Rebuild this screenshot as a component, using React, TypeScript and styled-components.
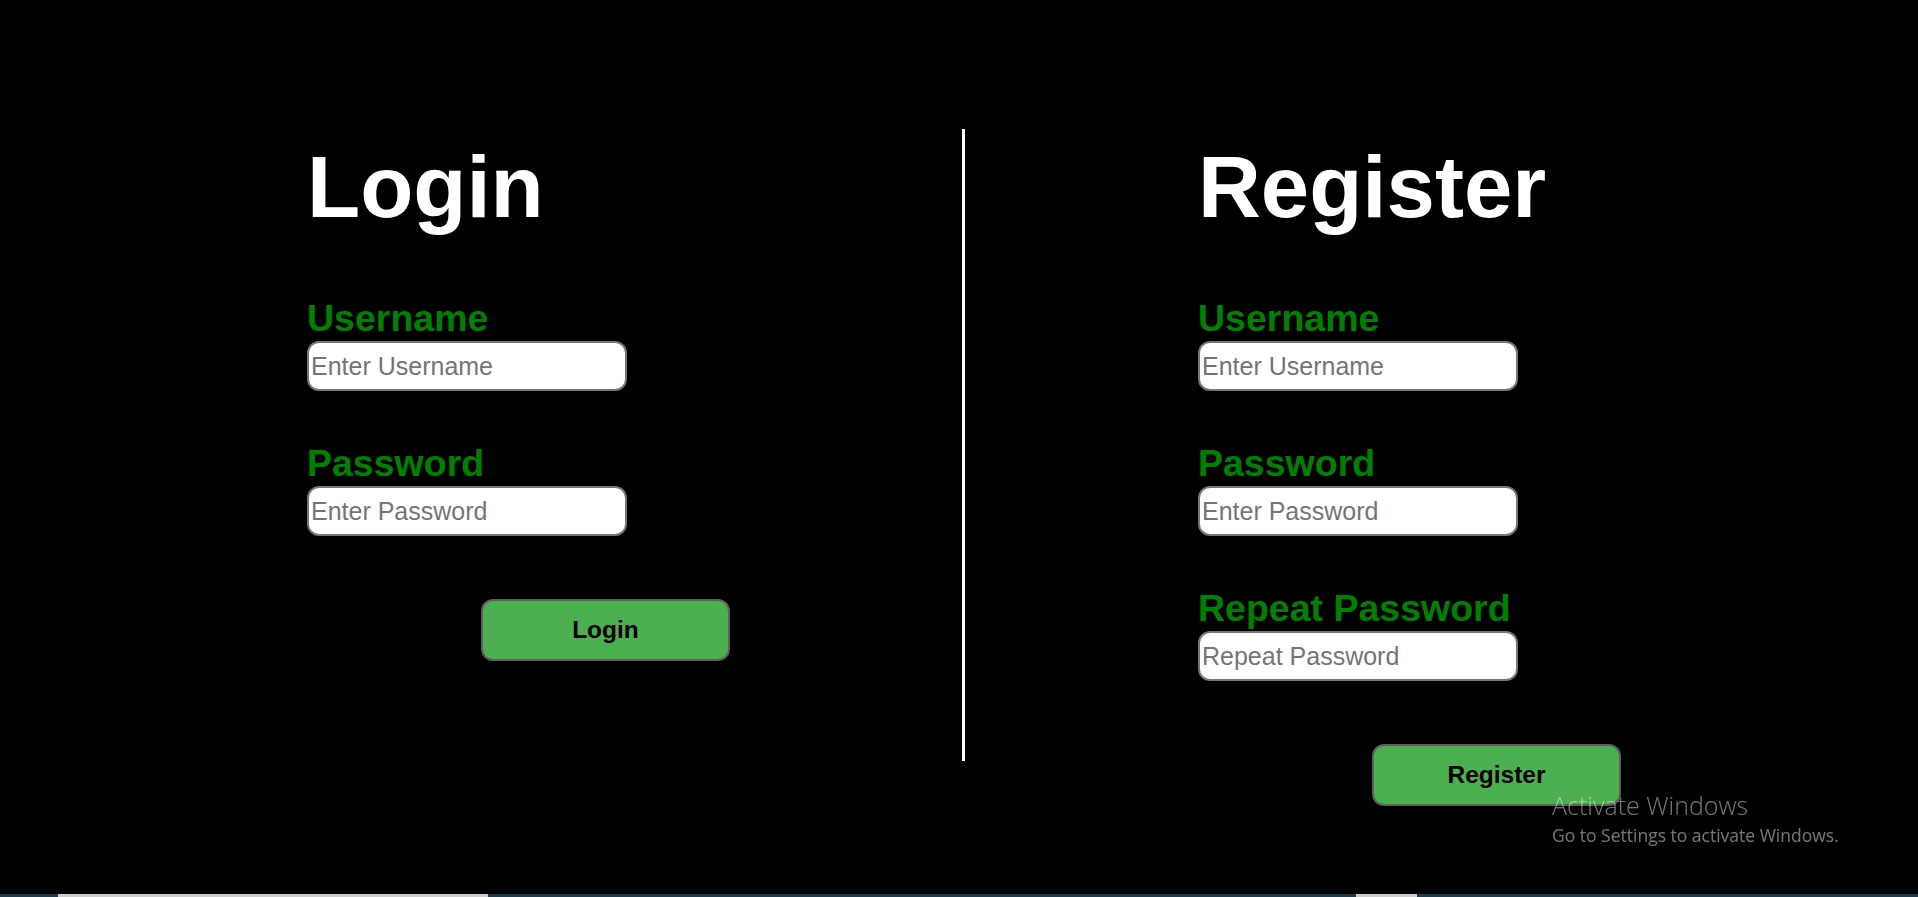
import React from "react";
import styled, { createGlobalStyle } from "styled-components";

const GlobalStyle = createGlobalStyle`
  html, body {
    margin: 0;
    padding: 0;
    background: #000;
    overflow: hidden;
  }
  #root {
    height: 100vh;
  }
`;

const Page = styled.div`
  height: 100vh;
  display: flex;
  flex-direction: column;
  background: #000;
  font-family: "Liberation Sans", Arial, sans-serif;
`;

const Main = styled.main`
  flex: 1;
  display: flex;
  flex-direction: row;
  align-items: flex-start;
`;

const Pane = styled.section<{ $width?: number; $padLeft: number }>`
  box-sizing: border-box;
  ${(p) => (p.$width ? `width: ${p.$width}px;` : "flex: 1;")}
  padding-left: ${(p) => p.$padLeft}px;
  padding-top: 137px;
  display: flex;
  flex-direction: column;
  align-items: flex-start;
`;

const Divider = styled.div`
  width: 3px;
  height: 632px;
  margin-top: 129px;
  background: #fff;
  flex-shrink: 0;
`;

const Title = styled.h1`
  margin: 0 0 59px 0;
  font-size: 87px;
  line-height: 100px;
  font-weight: bold;
  color: #fff;
`;

const Field = styled.div`
  display: flex;
  flex-direction: column;
  align-items: flex-start;
  margin-bottom: 50px;
`;

const Label = styled.label`
  font-size: 37.5px;
  line-height: 44px;
  font-weight: bold;
  color: #008000;
  margin-bottom: 1px;
`;

const Input = styled.input`
  box-sizing: border-box;
  width: 320px;
  height: 50px;
  margin: 0;
  padding: 0 2px;
  border: 2px solid #767676;
  border-radius: 12px;
  background: #fff;
  font-family: "Liberation Sans", Arial, sans-serif;
  font-size: 25px;
  color: #000;
  outline: none;
  &::placeholder {
    color: #757575;
  }
`;

const Button = styled.button`
  box-sizing: border-box;
  width: 249px;
  height: 62px;
  margin: 13px 0 0 174px;
  background: #4caf50;
  border: 2px solid #5e5e5e;
  border-radius: 12px;
  font-family: "Liberation Sans", Arial, sans-serif;
  font-size: 24.5px;
  font-weight: bold;
  color: #000;
  cursor: pointer;
`;

const Watermark = styled.div`
  position: fixed;
  left: 1552px;
  top: 791px;
  font-family: "Open Sans", "Noto Sans", sans-serif;
  color: rgba(255, 255, 255, 0.46);
  pointer-events: none;
`;

const WatermarkTitle = styled.div`
  font-size: 25px;
  line-height: 28.8px;
  font-weight: 300;
`;

const WatermarkSub = styled.div`
  font-size: 17.5px;
  line-height: 24px;
  margin-top: 3px;
  font-weight: 400;
`;

const BottomStrip = styled.div`
  height: 3px;
  flex-shrink: 0;
  background: #1f3a4b;
  display: flex;
`;

const StripSegment = styled.div<{ $left: number; $width: number }>`
  margin-left: ${(p) => p.$left}px;
  width: ${(p) => p.$width}px;
  background: #cdcdcd;
`;

type FieldDef = { label: string; placeholder: string; type: string };

const FormPane: React.FC<{
  title: string;
  fields: FieldDef[];
  button: string;
  width?: number;
  padLeft: number;
}> = ({ title, fields, button, width, padLeft }) => (
  <Pane $width={width} $padLeft={padLeft}>
    <Title>{title}</Title>
    {fields.map((f) => (
      <Field key={f.label}>
        <Label>{f.label}</Label>
        <Input type={f.type} placeholder={f.placeholder} />
      </Field>
    ))}
    <Button>{button}</Button>
  </Pane>
);

export default function App() {
  return (
    <>
      <GlobalStyle />
      <Page>
        <Main>
          <FormPane
            title="Login"
            width={962}
            padLeft={307}
            button="Login"
            fields={[
              { label: "Username", placeholder: "Enter Username", type: "text" },
              { label: "Password", placeholder: "Enter Password", type: "password" },
            ]}
          />
          <Divider />
          <FormPane
            title="Register"
            padLeft={233}
            button="Register"
            fields={[
              { label: "Username", placeholder: "Enter Username", type: "text" },
              { label: "Password", placeholder: "Enter Password", type: "password" },
              { label: "Repeat Password", placeholder: "Repeat Password", type: "password" },
            ]}
          />
        </Main>
        <BottomStrip>
          <StripSegment $left={58} $width={430} />
          <StripSegment $left={868} $width={61} />
        </BottomStrip>
        <Watermark>
          <WatermarkTitle>Activate Windows</WatermarkTitle>
          <WatermarkSub>Go to Settings to activate Windows.</WatermarkSub>
        </Watermark>
      </Page>
    </>
  );
}
